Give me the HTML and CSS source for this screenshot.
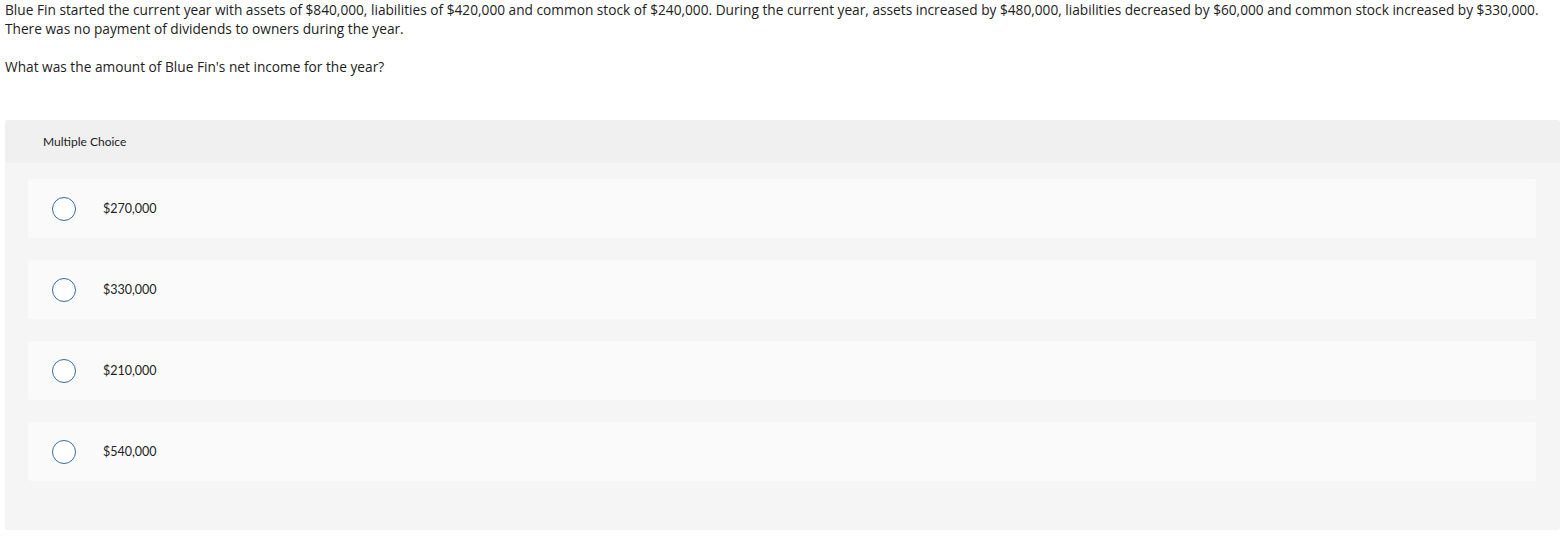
FILE: index.html
```html
<!DOCTYPE html>
<html>
<head>
<meta charset="utf-8">
<link rel="stylesheet" href="styles.css">
</head>
<body>
<div class="question">
  <p class="stem">Blue Fin started the current year with assets of $840,000, liabilities of $420,000 and common stock of $240,000. During the current year, assets increased by $480,000, liabilities decreased by $60,000 and common stock increased by $330,000.<br>There was no payment of dividends to owners during the year.</p>
  <p class="stem ask">What was the amount of Blue Fin's net income for the year?</p>
</div>
<div class="mc">
  <div class="mc-head">Multiple Choice</div>
  <div class="mc-body">
    <div class="opt"><span class="radio"></span><span class="label">$270,000</span></div>
    <div class="opt"><span class="radio"></span><span class="label">$330,000</span></div>
    <div class="opt"><span class="radio"></span><span class="label">$210,000</span></div>
    <div class="opt"><span class="radio"></span><span class="label">$540,000</span></div>
  </div>
</div>
</body>
</html>
```
FILE: styles.css
```css
html, body { margin: 0; padding: 0; background: #fff; }
body {
  font-family: "Lato", "Liberation Sans", sans-serif;
  color: #222;
  padding: 0 6px 0 5px;
}
.stem {
  margin: 0;
  font-family: "Open Sans", "Liberation Sans", sans-serif;
  font-size: 13.7px;
  line-height: 19px;
}
.ask { margin-top: 19px; }
.mc {
  margin-top: 44px;
  background: #f5f5f5;
  border-radius: 3px;
  overflow: hidden;
}
.mc-head {
  background: #f0f0f0;
  height: 43px;
  display: flex;
  align-items: center;
  padding-left: 38px;
  font-size: 12px;
  color: #222;
}
.mc-body {
  padding: 16px 24px 49px 23px;
  display: flex;
  flex-direction: column;
  gap: 22px;
}
.opt {
  background: #fafafa;
  border-radius: 3px;
  height: 59px;
  display: flex;
  align-items: center;
  padding-left: 24px;
}
.radio {
  width: 22px;
  height: 22px;
  border: 1.5px solid #3a6a9c;
  border-radius: 50%;
  background: #fff;
  flex: none;
}
.label {
  margin-left: 27px;
  font-size: 12.5px;
  color: #222;
}
```
